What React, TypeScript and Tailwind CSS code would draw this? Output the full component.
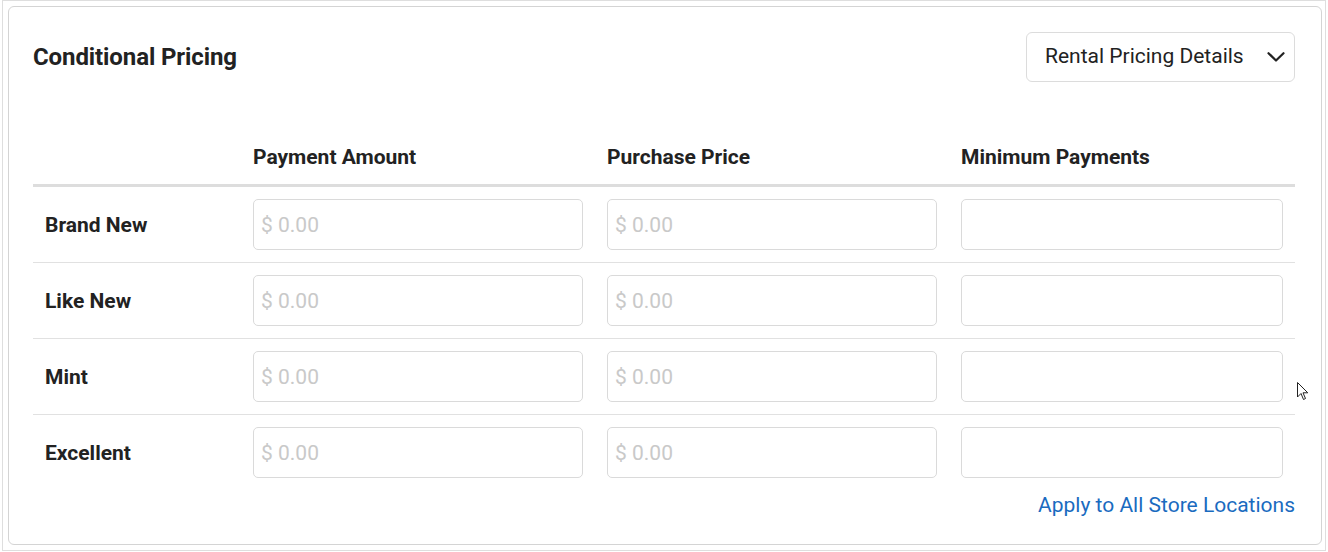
const columns = ["Payment Amount", "Purchase Price", "Minimum Payments"];
const conditions = ["Brand New", "Like New", "Mint", "Excellent"];

function PriceInput({ placeholder }: { placeholder?: string }) {
  return (
    <input
      type="text"
      placeholder={placeholder}
      className="w-full h-[51px] rounded-[5px] border border-[#dadada] bg-white px-[7px] text-[21px] text-[#222] placeholder:text-[#c9c9c9] outline-none"
    />
  );
}

export default function App() {
  return (
    <div
      className="relative w-full h-[552px] bg-white pl-[2px] pr-[2px] pb-[1px]"
      style={{ fontFamily: "Roboto, 'Liberation Sans', sans-serif" }}
    >
      <div className="h-full border border-[#dedede] pt-[5px] pl-[5px] pr-[3px] pb-[5px]">
        <div className="h-full rounded-[6px] border border-[#d4d4d4] pl-[24px] pr-[26px] pt-[25px]">
          {/* title row */}
          <div className="flex items-center justify-between h-[50px]">
            <h2 className="text-[24px] font-bold text-[#222] tracking-[-0.1px]">Conditional Pricing</h2>
            <button className="flex items-center h-[50px] w-[269px] rounded-[6px] border border-[#dcdcdc] bg-white pl-[18px] pr-[9px] text-[21px] text-[#222]">
              <span className="flex-1 text-left">Rental Pricing Details</span>
              <svg width="18" height="10" viewBox="0 0 18 10" fill="none">
                <path d="M1.5 1.2 L9 8.5 L16.5 1.2" stroke="#222" strokeWidth="2.2" strokeLinecap="round" strokeLinejoin="round" />
              </svg>
            </button>
          </div>

          {/* table */}
          <div className="mt-[64px]">
            <div className="grid grid-cols-[220px_354px_354px_1fr] border-b-[3px] border-[#dddddd] pb-[16px]">
              <div />
              {columns.map((c) => (
                <div key={c} className="text-[21px] font-bold text-[#222] leading-[22px]">
                  {c}
                </div>
              ))}
            </div>
            {conditions.map((name, i) => (
              <div
                key={name}
                className={
                  "grid grid-cols-[220px_354px_354px_1fr] items-center py-[12px] " +
                  (i < conditions.length - 1 ? "border-b border-[#e1e1e1]" : "")
                }
              >
                <div className="pl-[12px] pt-[2px] text-[21px] font-bold text-[#222]">{name}</div>
                <div className="pr-[24px]">
                  <PriceInput placeholder="$ 0.00" />
                </div>
                <div className="pr-[24px]">
                  <PriceInput placeholder="$ 0.00" />
                </div>
                <div className="pr-[12px]">
                  <PriceInput />
                </div>
              </div>
            ))}
            <div className="flex justify-end mt-[3px]">
              <a href="#" className="text-[21px] text-[#1a6bbf] leading-[24px]">
                Apply to All Store Locations
              </a>
            </div>
          </div>
        </div>
      </div>

      {/* mouse pointer */}
      <svg className="absolute left-[1297px] top-[382px]" width="12" height="19" viewBox="0 0 12 19">
        <path d="M0.5 0.5 L0.5 15 L4 11.5 L6.5 17.5 L8.5 16.5 L6 10.8 L10.8 10.8 Z" fill="#fff" stroke="#222" strokeWidth="1" strokeLinejoin="round" />
      </svg>
    </div>
  );
}
